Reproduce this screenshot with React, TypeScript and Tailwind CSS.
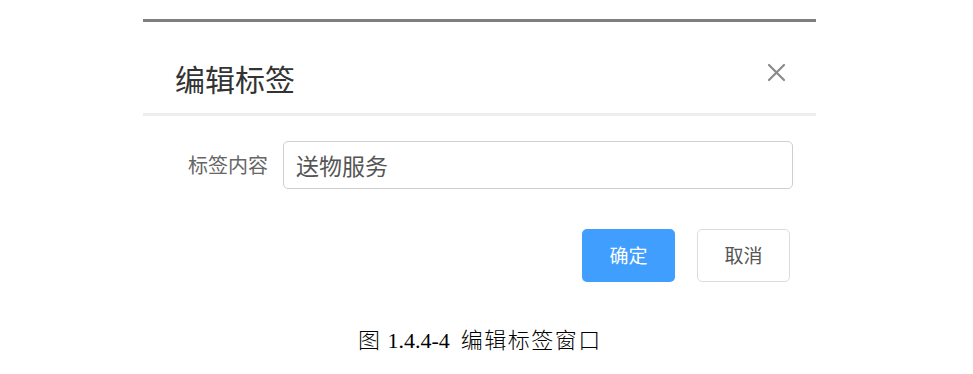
import React from "react";

export default function App() {
  const sans = { fontFamily: '"Noto Sans CJK SC", "Noto Sans", sans-serif' };
  return (
    <div className="w-[973px] h-[374px] bg-white overflow-hidden" style={sans}>
      <div className="pt-[19px] pl-[143px]">
        <div className="w-[673px]">
          <div className="h-[3px] bg-[#7f7f7f]" />
          <div className="flex justify-between pl-[32px] pr-[30px] pt-[37px] pb-[16px]">
            <div className="text-[30px] leading-[38px] text-[#333]">编辑标签</div>
            <svg width="19" height="19" viewBox="0 0 19 19" className="mt-[4px]">
              <path d="M2 2 L17 17 M17 2 L2 17" stroke="#8a8a8a" strokeWidth="2.2" strokeLinecap="round" />
            </svg>
          </div>
          <div className="h-[3px] bg-[#eeeeee]" />
          <div className="flex items-center pl-[45px] pr-[23px] mt-[25px]">
            <div className="w-[80px] text-[20px] leading-[24px] text-[#666] whitespace-nowrap">标签内容</div>
            <div className="ml-[15px] flex-1 h-[48px] border border-[#cfcfcf] rounded-[5px] flex items-center pl-[12px] text-[23px] text-[#555]">
              送物服务
            </div>
          </div>
          <div className="flex justify-end gap-[22px] pr-[26px] mt-[40px]">
            <button className="w-[93px] h-[53px] rounded-[5px] bg-[#409eff] text-white text-[19px]">确定</button>
            <button className="w-[93px] h-[53px] rounded-[5px] bg-white border border-[#dcdcdc] text-[#555] text-[19px]">取消</button>
          </div>
        </div>
      </div>
      <div
        className="mt-[46px] pl-[358px] text-[22px] leading-[26px] text-black whitespace-pre font-light"
        style={{ fontFamily: '"Liberation Serif", "Noto Sans CJK SC", serif' }}
      >
        <span className="tracking-[2px]">图</span> 1.4.4-4  <span className="tracking-[1.5px]">编辑标签窗口</span>
      </div>
    </div>
  );
}
